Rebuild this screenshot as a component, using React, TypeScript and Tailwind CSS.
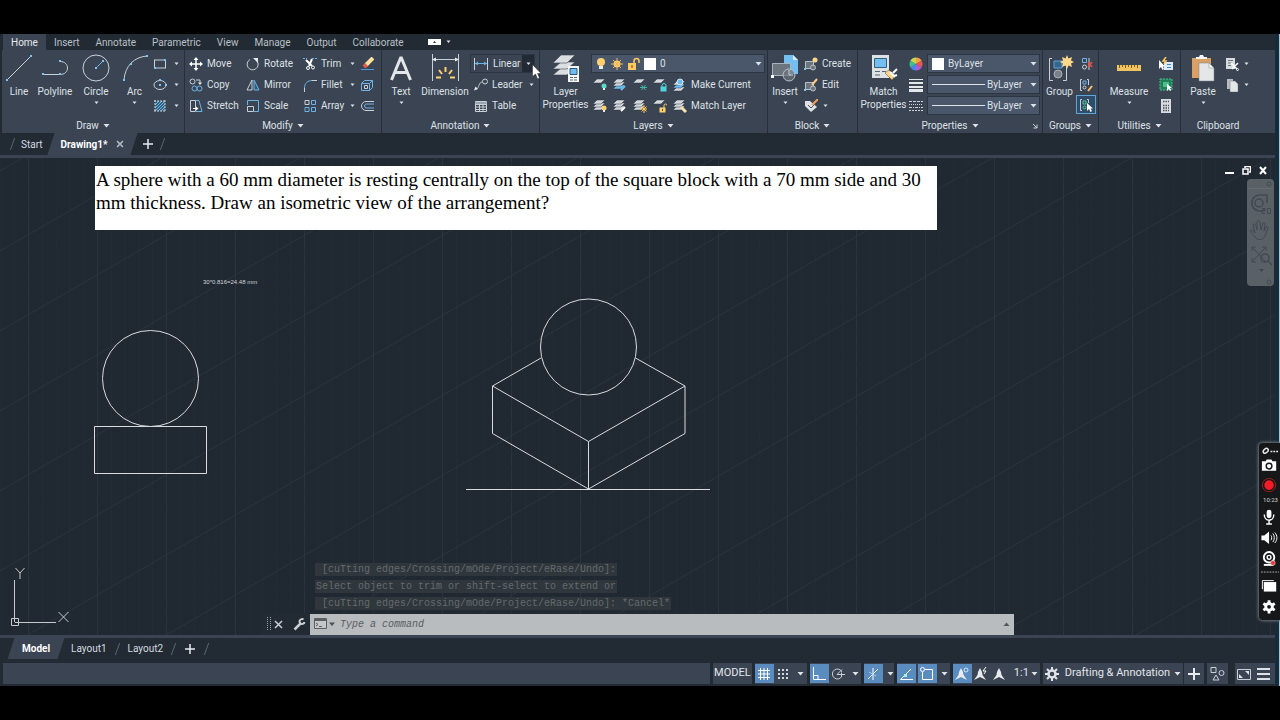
import { useState, type ReactNode } from "react";
import clsx from "clsx";

type IconProps = { w?: number; h?: number; children: ReactNode };

const Icon = ({ w = 14, h = 14, children }: IconProps) => (
  <svg
    width={w}
    height={h}
    viewBox={`0 0 ${w} ${h}`}
    fill="none"
    stroke="#c9d0d8"
    strokeWidth="1"
    className="shrink-0"
    aria-hidden="true">
    {children}
  </svg>
);

const Arrow = ({ small = false }: { small?: boolean }) => (
  <svg width="7" height="4" viewBox="0 0 7 4" className="shrink-0" aria-hidden="true">
    <path d={small ? "M1.5 0.5h4l-2 2.5z" : "M0.5 0h6l-3 3.5z"} fill="#dfe3e8" />
  </svg>
);

const Dot = ({ x, y }: { x: number; y: number }) => (
  <rect x={x - 1} y={y - 1} width="2" height="2" fill="#7cc4f4" stroke="none" />
);

/* ---------- draw ---------- */

const LineIcon = () => (
  <Icon w={30} h={30}>
    <path d="M3 27L27 3" />
    <Dot x={3} y={27} />
    <Dot x={27} y={3} />
  </Icon>
);

const PolylineIcon = () => (
  <Icon w={30} h={30}>
    <path d="M3 21.500h17c10 0 10-13 0-13" />
    <Dot x={3} y={21} />
    <Dot x={20} y={21} />
    <Dot x={20} y={8} />
  </Icon>
);

const CircleIcon = () => (
  <Icon w={30} h={30}>
    <circle cx="15" cy="15" r="13" />
    <path d="M15 15l7-7" stroke="#6cb4e6" />
    <Dot x={15} y={15} />
    <Dot x={22} y={8} />
  </Icon>
);

const ArcIcon = () => (
  <Icon w={30} h={30}>
    <path d="M4 27C5 13 14 4 27 3" />
    <Dot x={4} y={27} />
    <Dot x={11} y={11} />
    <Dot x={27} y={3} />
  </Icon>
);

const RectIcon = () => (
  <Icon>
    <rect x="1.500" y="3" width="11" height="8" />
    <Dot x={2} y={11} />
    <Dot x={12} y={3} />
  </Icon>
);

const EllipseIcon = () => (
  <Icon>
    <ellipse cx="7" cy="7" rx="6" ry="4.500" />
    <Dot x={7} y={7} />
    <Dot x={13} y={7} />
    <Dot x={7} y={2} />
  </Icon>
);

const HatchIcon = () => (
  <Icon>
    <path d="M2 2h10v10H2z" fill="#35607f" stroke="none" />
    <path d="M2 6l4-4M2 9l7-7M2 12l10-10M5 12l7-7M8 12l4-4" stroke="#6cb4e6" />
    <path d="M1 2h12M1 12h12M2 1v12M12 1v12" strokeDasharray="2 1" />
  </Icon>
);

/* ---------- modify ---------- */

const MoveIcon = () => (
  <Icon>
    <path d="M7 2v10M2 7h10" stroke="#fff" strokeWidth="1.500" />
    <path d="M7 0l2.500 3h-5zM7 14l2.500-3h-5zM0 7l3-2.500v5zM14 7l-3-2.500v5z" fill="#fff" stroke="none" />
  </Icon>
);

const RotateIcon = () => (
  <Icon>
    <path d="M4 2.500a5.500 5.500 0 1 0 7 1.500" />
    <path d="M7 1h5v5z" fill="#e8ebee" stroke="none" />
  </Icon>
);

const TrimIcon = () => (
  <Icon>
    <path d="M0 1.500h4M9 1.500h5" stroke="#6cb4e6" strokeDasharray="2 1" />
    <path d="M3 3l6 6M9 2l-3 7" stroke="#fff" strokeWidth="2" />
    <circle cx="5" cy="11" r="1.500" stroke="#fff" />
    <circle cx="10" cy="10.500" r="1.500" stroke="#fff" />
  </Icon>
);

const EraseIcon = () => (
  <Icon>
    <path d="M1 12.500h13" stroke="#4b9bdc" />
    <path d="M13 1l-7 7" stroke="#ffe0a0" strokeWidth="4" />
    <path d="M6.500 7.500L4 10" stroke="#e25b4d" strokeWidth="4" />
  </Icon>
);

const CopyIcon = () => (
  <Icon>
    <circle cx="3.500" cy="3.500" r="2.500" />
    <path d="M7 2h4v4" />
    <path d="M9 4.500h4l-2 2.500z" fill="#e8ebee" stroke="none" />
    <circle cx="5.500" cy="10.500" r="2.500" stroke="#6cb4e6" />
    <circle cx="10.500" cy="10.500" r="2.500" stroke="#6cb4e6" />
  </Icon>
);

const MirrorIcon = () => (
  <Icon>
    <path d="M6 2v10H1z" />
    <path d="M8 2v10h5z" stroke="#6cb4e6" fill="#315a7c" />
  </Icon>
);

const FilletIcon = () => (
  <Icon>
    <path d="M1.500 14v-4" />
    <path d="M1.500 10C1.500 5 5 2.500 9 2.500" stroke="#6cb4e6" />
    <path d="M9 2.500h5" />
  </Icon>
);

const ExplodeIcon = () => (
  <Icon>
    <path d="M1.500 5.500h8v7h-8zM1.500 5.500l3-3h8v7l-3 3M9.500 5.500l3-3" stroke="#6cb4e6" />
    <path d="M4.500 7.500h3v3h-3z" />
  </Icon>
);

const StretchIcon = () => (
  <Icon>
    <path d="M1.500 1.500h5v11h-5z" />
    <path d="M7 1.500h3l3 11H7" stroke="#6cb4e6" />
    <path d="M4 9.500h4" stroke="#fff" />
    <path d="M7 7.500l2.500 2-2.500 2z" fill="#fff" stroke="none" />
  </Icon>
);

const ScaleIcon = () => (
  <Icon>
    <path d="M1.500 6V1.500h11v11H8" stroke="#6cb4e6" />
    <path d="M1.500 7.500h6v5h-6z" />
  </Icon>
);

const ArrayIcon = () => (
  <Icon>
    <path d="M2 1.500h4v4H2z" />
    <path d="M8.500 1.500h4v4h-4zM2 8.500h4v4H2zM8.500 8.500h4v4h-4z" stroke="#6cb4e6" />
  </Icon>
);

const OffsetIcon = () => (
  <Icon>
    <path d="M14 2.500H6a4.500 4.500 0 0 0 0 9h8" />
    <path d="M14 5h-7.500a2 2 0 0 0 0 4H14" stroke="#6cb4e6" />
  </Icon>
);

/* ---------- annotation ---------- */

const TextIcon = () => (
  <Icon w={24} h={30}>
    <path d="M2.500 27L12 4l9.500 23M6 19.500h12" stroke="#e4e7ea" strokeWidth="3" strokeLinejoin="bevel" />
  </Icon>
);

const DimensionIcon = () => (
  <Icon w={30} h={30}>
    <path d="M2.500 1v27M28.500 1v27M3 6.500h25" />
    <path d="M2 6.500l4-2v4zM29 6.500l-4-2v4z" fill="#e8ebee" stroke="none" />
    <path d="M15.500 14v5M9 17l3 4M22 17l-3 4M6 24.500h5M20 24.500h5" stroke="#ffd070" strokeWidth="2" />
  </Icon>
);

const LinearIcon = () => (
  <Icon w={16}>
    <path d="M1.500 1v12M14.500 1v12" />
    <path d="M2 6.500h12" stroke="#6cb4e6" />
    <path d="M2 6.500l3-2v4zM14 6.500l-3-2v4z" fill="#6cb4e6" stroke="none" />
  </Icon>
);

const LeaderIcon = () => (
  <Icon>
    <circle cx="11" cy="3.500" r="2.500" />
    <path d="M8.500 4C4 4 6 10 2 11" stroke="#b8c0c8" />
    <path d="M0 12.500l1.500-4 2.500 2.500z" fill="#e8ebee" stroke="none" />
  </Icon>
);

const TableIcon = () => (
  <Icon>
    <path d="M1.500 2.500h11v10h-11zM1.500 5.500h11M1.500 8h11M1.500 10.500h11M5.500 5v7M9 5v7" />
    <path d="M1.500 3h11v2h-11z" fill="#9aa4ae" stroke="none" />
  </Icon>
);

/* ---------- layers ---------- */

const LayerPropertiesIcon = () => (
  <Icon w={30} h={30}>
    <g fill="#dcdfe2" stroke="#3b4453" strokeWidth="0.600">
      <path d="M2 22l8-7h14l-8 7z" />
      <path d="M2 16l8-7h14l-8 7z" />
      <path d="M2 10l8-8h14l-8 8z" />
    </g>
    <path d="M17 13h11v16H17z" fill="#f4f6f8" stroke="none" />
    <path d="M19 15.500h7v6h-7z" fill="#6ebcf0" stroke="#2c587c" />
    <path d="M19 24.500h7M19 27h7" stroke="#5b6670" strokeDasharray="3 1" />
  </Icon>
);

const Sheet = ({ y, fill = "#d5d9dd" }: { y: number; fill?: string }) => (
  <path d={`M0 ${y + 4}l4-4h8l-4 4z`} fill={fill} stroke="#2f3743" strokeWidth="0.500" />
);

const Bulb = ({ x, y, color }: { x: number; y: number; color: string }) => (
  <g stroke="none">
    <circle cx={x} cy={y} r="2.500" fill={color} />
    <rect x={x - 1} y={y + 2} width="2" height="2" fill="#e8ebee" />
  </g>
);

const LayerOffIcon = () => (
  <Icon>
    <Sheet y={1} />
    <Bulb x={11} y={8} color="#5fd8c8" />
  </Icon>
);

const LayerIsolateIcon = () => (
  <Icon>
    <Sheet y={7} fill="#6ebcf0" />
    <Sheet y={4} />
    <Sheet y={1} />
    <path d="M12 8l-4 4" stroke="#6ebcf0" strokeWidth="2" />
  </Icon>
);

const LayerFreezeIcon = () => (
  <Icon>
    <Sheet y={1} />
    <path d="M7 9.500h7M8.500 7l4 5M12.500 7l-4 5" stroke="#43b8a6" />
  </Icon>
);

const LayerLockIcon = () => (
  <Icon>
    <Sheet y={1} />
    <path d="M9 9V7.500a1.500 1.500 0 0 1 4 0V9" stroke="#52d2dc" />
    <path d="M7.500 8.500h6v5h-6z" fill="#52d2dc" stroke="none" />
  </Icon>
);

const MakeCurrentIcon = () => (
  <Icon>
    <Sheet y={9} />
    <Sheet y={6} fill="#6ebcf0" />
    <Sheet y={3} />
    <circle cx="7" cy="4" r="3" fill="#6ebcf0" stroke="#d5e6f2" />
  </Icon>
);

const LayerOnIcon = () => (
  <Icon>
    <Sheet y={7} />
    <Sheet y={4} />
    <Sheet y={1} />
    <Bulb x={11} y={9} color="#ffd070" />
  </Icon>
);

const UnisolateIcon = () => (
  <Icon>
    <Sheet y={7} />
    <Sheet y={4} />
    <Sheet y={1} />
    <path d="M12 8l-4 4" stroke="#fff" strokeWidth="2" />
  </Icon>
);

const ThawIcon = () => (
  <Icon>
    <Sheet y={7} />
    <Sheet y={4} />
    <Sheet y={1} />
    <path d="M11 6v8M7 10h8M8.500 7.500l5 5M13.500 7.500l-5 5" stroke="#ffc860" />
  </Icon>
);

const UnlockIcon = () => (
  <Icon>
    <Sheet y={1} />
    <path d="M11 9V6.500a1.500 1.500 0 0 1 3 0" stroke="#ffd070" />
    <path d="M6.500 8.500h6v5h-6z" fill="#ffd070" stroke="none" />
    <path d="M9 10h1v2H9z" fill="#6b4d10" stroke="none" />
  </Icon>
);

const MatchLayerIcon = () => (
  <Icon>
    <Sheet y={7} />
    <Sheet y={4} />
    <Sheet y={1} />
    <path d="M8 8l5 5" stroke="#f8e3b0" strokeWidth="3" />
  </Icon>
);

const LayerStateIcons = () => (
  <Icon w={46}>
    <circle cx="5" cy="5" r="4" fill="#ffd070" stroke="none" />
    <path d="M3 9h4v3H3z" fill="#e8ebee" stroke="none" />
    <circle cx="21" cy="7" r="3.500" fill="#ffd070" stroke="none" />
    <path d="M21 1v12M15 7h12M17 3l8 8M25 3l-8 8" stroke="#e9b85c" />
    <path d="M38 6V4a2.500 2.500 0 0 1 5 0v2" stroke="#ffc860" strokeWidth="1.500" />
    <path d="M32 6h8v7h-8z" fill="#ffc860" stroke="none" />
    <path d="M35.500 8h1v3h-1z" fill="#6b4d10" stroke="none" />
  </Icon>
);

/* ---------- block ---------- */

const InsertIcon = () => (
  <Icon w={30} h={30}>
    <path d="M14 2h9l5 5v14H14z" fill="#74bff2" stroke="none" />
    <path d="M23 2v5h5z" fill="#d6ecfb" stroke="none" />
    <path d="M2.500 10.500h18v12h-18z" fill="#6c747d" stroke="#aab2ba" />
    <circle cx="19" cy="22" r="6" fill="#6c747d" fillOpacity="0.700" stroke="#b8c0c8" />
    <path d="M19 17v5h4" />
    <path d="M1 22h3v3H1z" fill="#fff" stroke="none" />
  </Icon>
);

const CreateIcon = () => (
  <Icon>
    <path d="M1.500 4.500h8v7h-8z" fill="#6c747d" stroke="#b8c0c8" />
    <circle cx="9" cy="10.500" r="2.500" fill="#6c747d" stroke="#b8c0c8" />
    <circle cx="11" cy="3" r="2.500" fill="#ffd88a" stroke="none" />
    <Dot x={1} y={12} />
  </Icon>
);

const EditIcon = () => (
  <Icon>
    <path d="M1.500 4.500h8v7h-8z" fill="#6c747d" stroke="#b8c0c8" />
    <circle cx="9" cy="10.500" r="2.500" fill="#6c747d" stroke="#b8c0c8" />
    <path d="M13 1L8 7" stroke="#ffc98a" strokeWidth="2" />
    <Dot x={1} y={12} />
  </Icon>
);

const AttributesIcon = () => (
  <Icon>
    <path d="M1 2h5l7 6-6 5-6-6z" fill="#dfe2e5" stroke="none" />
    <path d="M4 6l3 3 3-3" stroke="#4a5360" />
    <path d="M14 0L8 6" stroke="#f0a35c" strokeWidth="2" />
  </Icon>
);

/* ---------- properties ---------- */

const MatchPropertiesIcon = () => (
  <Icon w={30} h={30}>
    <path d="M3 2h17v23H3z" fill="#dfe2e5" stroke="none" />
    <path d="M5.500 5.500h12v9h-12z" fill="#74bff2" stroke="#33607f" />
    <path d="M6 18.500h5M6 22h5M13 18.500h4" stroke="#5b6670" />
    <path d="M16 20l4-3 6 6-3 4z" fill="#ffd48a" stroke="#5a4a2c" strokeWidth="0.500" />
    <path d="M21 19l5 5M24 20l4-4M25 23l3-1" stroke="#fff" strokeWidth="2" />
  </Icon>
);

const ColorWheelIcon = () => (
  <Icon>
    <g stroke="none">
      <path d="M7 7V0.500a6.500 6.500 0 0 1 5.600 3.200z" fill="#f5a142" />
      <path d="M7 7l5.600-3.300a6.500 6.500 0 0 1 0 6.600z" fill="#e8584f" />
      <path d="M7 7l5.600 3.300A6.500 6.500 0 0 1 7 13.500z" fill="#b45bd0" />
      <path d="M7 7v6.500a6.500 6.500 0 0 1-5.600-3.200z" fill="#4a86e8" />
      <path d="M7 7l-5.600 3.300a6.500 6.500 0 0 1 0-6.600z" fill="#3fbf8f" />
      <path d="M7 7L1.400 3.700A6.500 6.500 0 0 1 7 0.500z" fill="#c8d84e" />
    </g>
  </Icon>
);

const LineweightIcon = () => (
  <Icon>
    <path d="M0 1h14v1H0zM0 4h14v2H0zM0 8h14v2H0zM0 11h14v3H0z" fill="#e4e7ea" stroke="none" />
  </Icon>
);

const LinetypeIcon = () => (
  <Icon>
    <path d="M0 2.500h14" strokeDasharray="3 1" />
    <path d="M0 5.500h14" strokeDasharray="1 1" />
    <path d="M0 8.500h14" strokeDasharray="3 1 1 1" />
    <path d="M0 11.500h14" strokeDasharray="2 1" />
  </Icon>
);

/* ---------- groups ---------- */

const GroupIcon = () => (
  <Icon w={30} h={30}>
    <path d="M7 5.500H4.500v22H8M18 27.500h3.500V14" />
    <path d="M9 8h8v7H9z" fill="#35658c" stroke="#5fa6d8" />
    <circle cx="13" cy="21" r="4" fill="#79818a" stroke="#a8b0b8" />
    <path d="M22 2l1.500 3.500L27 4l-1 3.500 3 1.500-3 1.500 1 3.500-3.500-1.500L22 16l-1.500-3.500L17 14l1-3.500L15 9l3-1.500L17 4l3.500 1.500z" fill="#ffd88a" stroke="none" />
  </Icon>
);

const UngroupIcon = () => (
  <Icon>
    <path d="M3.500 1.500h4v4h-4z" stroke="#6cb4e6" />
    <circle cx="5.500" cy="10" r="2" />
    <path d="M10 1v12" />
    <path d="M9 5l4 5M13 5l-4 5" stroke="#ec5048" strokeWidth="1.500" />
  </Icon>
);

const GroupEditIcon = () => (
  <Icon>
    <path d="M3 1.500H1.500v11H3M8 1.500h1.500V7" />
    <path d="M4 3h3v3H4z" stroke="#6cb4e6" />
    <circle cx="5.500" cy="9.500" r="1.500" />
    <path d="M13 8l-4 5" stroke="#ffc070" strokeWidth="2" />
  </Icon>
);

const GroupSelectIcon = () => (
  <Icon>
    <path d="M3 1.500H1.500v11H3M8 1.500h1.500V5" />
    <path d="M4 3h3v3H4z" stroke="#58c890" />
    <circle cx="5.500" cy="9.500" r="1.500" stroke="#58c890" />
    <path d="M8 5v8l2-2 1.500 3 1.500-1-1.500-2.500H14z" fill="#fff" stroke="none" />
  </Icon>
);

/* ---------- utilities + clipboard ---------- */

const RulerIcon = () => (
  <Icon w={26} h={30}>
    <path d="M1 12h24v6H1z" fill="#f0c460" stroke="none" />
    <path d="M3.500 12v3M6.500 12v2M9.500 12v3M12.500 12v2M15.500 12v3M18.500 12v2M21.500 12v3" stroke="#7a5d20" />
  </Icon>
);

const QuickSelectIcon = () => (
  <Icon>
    <path d="M5 5h9v8H5z" fill="#dcebf7" stroke="none" />
    <path d="M8 7.500h4M8 10.500h4" stroke="#3d86c8" />
    <path d="M7 0L4 4h3L5 7" stroke="#ffc860" strokeWidth="1.500" />
    <path d="M0 3v9l2-2 1.500 3L5 12 4 9.500h2z" fill="#fff" stroke="none" />
  </Icon>
);

const SelectAllIcon = () => (
  <Icon>
    <path d="M1 1h12v11H1z" fill="#1f7f58" stroke="#4fc08d" strokeDasharray="2 1" />
    <path d="M4 4h6v5H4z" fill="#4fc08d" stroke="none" />
    <path d="M8 6v7l2-2 1 2 1-1-1-2h2z" fill="#fff" stroke="none" />
  </Icon>
);

const CalculatorIcon = () => (
  <Icon>
    <path d="M2 0h10v14H2z" fill="#d8dbde" stroke="none" />
    <path d="M4 2.500h6M4 6.500h6M4 9h6M4 11.500h6" stroke="#4a525c" strokeDasharray="1.500 1" strokeWidth="1.500" />
  </Icon>
);

const PasteIcon = () => (
  <Icon w={26} h={30}>
    <path d="M2 5h19v20H2z" fill="#d9a066" stroke="none" />
    <path d="M6 6V4h3l1-2h3l1 2h3v2z" fill="#f4f6f8" stroke="none" />
    <path d="M9 10h10l5 5v13H9z" fill="#e4e6e8" stroke="#7b828a" strokeWidth="0.500" />
    <path d="M19 10v5h5z" fill="#fff" stroke="#7b828a" strokeWidth="0.500" />
  </Icon>
);

const CutIcon = () => (
  <Icon>
    <path d="M1 1h9v11H1z" fill="#d8dbde" stroke="none" />
    <path d="M3 3.500h5M3 6h4M3 8.500h3" stroke="#6b747e" />
    <path d="M6 6l6 6M13 6l-6 6" stroke="#fff" strokeWidth="1.500" />
    <circle cx="12.500" cy="12.500" r="1" stroke="#fff" />
  </Icon>
);

const CopyClipIcon = () => (
  <Icon>
    <path d="M2 1h6v10H2z" fill="#b8bdc2" stroke="none" />
    <path d="M5 3h5l3 3v8H5z" fill="#e4e6e8" stroke="#6b747e" strokeWidth="0.500" />
  </Icon>
);

/* ---------- ribbon parts ---------- */

const Panel = ({
  title,
  className,
  menu = true,
  launcher = false,
  children,
}: {
  title: string;
  className: string;
  menu?: boolean;
  launcher?: boolean;
  children: ReactNode;
}) => (
  <section className={clsx("flex flex-col border-[#272f3a] pt-[3px]", className)}>
    <div className="flex h-[63px]">{children}</div>
    <div className="relative flex h-[17px] items-center justify-center gap-1 pt-0.5">
      <span>{title}</span>
      {menu && <Arrow />}
      {launcher && (
        <span className="absolute right-1">
          <Icon w={6} h={6}>
            <path d="M1 1l4 4M5 1.500V5H1.500" />
          </Icon>
        </span>
      )}
    </div>
  </section>
);

const BigButton = ({
  icon,
  label,
  second,
  arrow = false,
  className,
}: {
  icon: ReactNode;
  label: string;
  second?: string;
  arrow?: boolean;
  className: string;
}) => (
  <button type="button" className={clsx("flex shrink-0 flex-col items-center", className)}>
    {icon}
    <span className="leading-[18px]">{label}</span>
    {second && <span className="leading-2">{second}</span>}
    {arrow && <Arrow small />}
  </button>
);

const Tool = ({ icon, label, arrow = false }: { icon: ReactNode; label?: string; arrow?: boolean }) => (
  <button type="button" className="flex h-[21px] w-full items-center gap-1">
    {icon}
    {label && <span className="whitespace-nowrap">{label}</span>}
    {arrow && (
      <span className="ml-auto">
        <Arrow small />
      </span>
    )}
  </button>
);

const Combo = ({ label, value, children }: { label: string; value: string; children: ReactNode }) => (
  <label className="my-px flex h-[19px] items-center border border-[#2c3542] bg-[#4a566a] pr-0.5 pl-1">
    {children}
    <select
      aria-label={label}
      defaultValue={value}
      className="min-w-0 flex-1 appearance-none bg-transparent outline-none">
      <option>{value}</option>
    </select>
    <Arrow />
  </label>
);

const Ribbon = () => (
  <div className="ml-0.5 flex h-[83px] bg-[#3b4453]">
    <Panel title="Draw" className="w-[183px] border-r">
      <BigButton icon={<LineIcon />} label="Line" className="w-[34px]" />
      <BigButton icon={<PolylineIcon />} label="Polyline" className="w-[38px]" />
      <BigButton icon={<CircleIcon />} label="Circle" arrow className="w-[44px]" />
      <BigButton icon={<ArcIcon />} label="Arc" arrow className="w-[33px]" />
      <div className="flex-1 pr-1 pl-0.5">
        <Tool icon={<RectIcon />} arrow />
        <Tool icon={<EllipseIcon />} arrow />
        <Tool icon={<HatchIcon />} arrow />
      </div>
    </Panel>

    <Panel title="Modify" className="w-[197px] border-r">
      <div className="grid flex-1 grid-cols-[53px_53px_53px_14px] content-start gap-x-1 pl-1">
        <Tool icon={<MoveIcon />} label="Move" />
        <Tool icon={<RotateIcon />} label="Rotate" />
        <Tool icon={<TrimIcon />} label="Trim" arrow />
        <Tool icon={<EraseIcon />} />
        <Tool icon={<CopyIcon />} label="Copy" />
        <Tool icon={<MirrorIcon />} label="Mirror" />
        <Tool icon={<FilletIcon />} label="Fillet" arrow />
        <Tool icon={<ExplodeIcon />} />
        <Tool icon={<StretchIcon />} label="Stretch" />
        <Tool icon={<ScaleIcon />} label="Scale" />
        <Tool icon={<ArrayIcon />} label="Array" arrow />
        <Tool icon={<OffsetIcon />} />
      </div>
    </Panel>

    <Panel title="Annotation" className="w-[158px] border-r">
      <BigButton icon={<TextIcon />} label="Text" arrow className="w-[38px]" />
      <BigButton icon={<DimensionIcon />} label="Dimension" className="w-[50px]" />
      <div className="flex-1 pr-1">
        <div className="my-px flex h-[19px] border border-[#2c3542]">
          <button type="button" className="flex flex-1 items-center gap-1 pl-0.5">
            <LinearIcon />
            Linear
          </button>
          <button type="button" aria-label="Linear menu" className="flex w-3 items-center justify-center bg-[#222a35]">
            <Arrow small />
          </button>
        </div>
        <div className="pl-1">
          <Tool icon={<LeaderIcon />} label="Leader" arrow />
          <Tool icon={<TableIcon />} label="Table" />
        </div>
      </div>
    </Panel>

    <Panel title="Layers" className="w-[228px] border-r">
      <BigButton icon={<LayerPropertiesIcon />} label="Layer" second="Properties" className="w-[51px]" />
      <div className="flex-1 pr-0.5">
        <Combo label="Layer" value="0">
          <LayerStateIcons />
          <span className="mr-1 ml-0.5 h-3 w-3 bg-white" />
        </Combo>
        <div className="grid grid-cols-[16px_16px_16px_16px_80px] gap-x-1 pl-0.5">
          <Tool icon={<LayerOffIcon />} />
          <Tool icon={<LayerIsolateIcon />} />
          <Tool icon={<LayerFreezeIcon />} />
          <Tool icon={<LayerLockIcon />} />
          <Tool icon={<MakeCurrentIcon />} label="Make Current" />
          <Tool icon={<LayerOnIcon />} />
          <Tool icon={<UnisolateIcon />} />
          <Tool icon={<ThawIcon />} />
          <Tool icon={<UnlockIcon />} />
          <Tool icon={<MatchLayerIcon />} label="Match Layer" />
        </div>
      </div>
    </Panel>

    <Panel title="Block" className="w-[90px] border-r">
      <BigButton icon={<InsertIcon />} label="Insert" arrow className="w-[34px]" />
      <div className="pl-0.5">
        <Tool icon={<CreateIcon />} label="Create" />
        <Tool icon={<EditIcon />} label="Edit" />
        <div className="w-6">
          <Tool icon={<AttributesIcon />} arrow />
        </div>
      </div>
    </Panel>

    <Panel title="Properties" launcher className="w-[185px] border-r">
      <BigButton icon={<MatchPropertiesIcon />} label="Match" second="Properties" className="w-[51px]" />
      <div className="w-[18px]">
        <Tool icon={<ColorWheelIcon />} />
        <Tool icon={<LineweightIcon />} />
        <Tool icon={<LinetypeIcon />} />
      </div>
      <div className="flex flex-1 flex-col pr-0.5">
        <Combo label="Object color" value="ByLayer">
          <span className="mr-1 h-3 w-3 bg-white" />
        </Combo>
        <Combo label="Lineweight" value="ByLayer">
          <span className="mr-0.5 h-px w-[53px] bg-[#dfe3e8]" />
        </Combo>
        <Combo label="Linetype" value="ByLayer">
          <span className="mr-0.5 h-px w-[53px] bg-[#dfe3e8]" />
        </Combo>
      </div>
    </Panel>

    <Panel title="Groups" className="w-[56px] border-r">
      <BigButton icon={<GroupIcon />} label="Group" className="w-[33px]" />
      <div className="w-[20px]">
        <div className="px-[3px]">
          <Tool icon={<UngroupIcon />} />
          <Tool icon={<GroupEditIcon />} />
        </div>
        <div className="border border-[#5fa6d8] bg-[#2f4c68] px-0.5">
          <button type="button" aria-label="Group selection" className="flex h-[17px] items-center">
            <GroupSelectIcon />
          </button>
        </div>
      </div>
    </Panel>

    <Panel title="Utilities" className="w-[82px] border-r">
      <BigButton icon={<RulerIcon />} label="Measure" arrow className="w-[60px]" />
      <div className="w-[14px]">
        <Tool icon={<QuickSelectIcon />} />
        <Tool icon={<SelectAllIcon />} />
        <Tool icon={<CalculatorIcon />} />
      </div>
    </Panel>

    <Panel title="Clipboard" menu={false} className="w-[74px]">
      <BigButton icon={<PasteIcon />} label="Paste" arrow className="w-[44px]" />
      <div className="w-6">
        <Tool icon={<CutIcon />} arrow />
        <Tool icon={<CopyClipIcon />} arrow />
      </div>
    </Panel>
  </div>
);

/* ---------- tab rows ---------- */

const menuTabs = ["Home", "Insert", "Annotate", "Parametric", "View", "Manage", "Output", "Collaborate"];

const MenuTabs = () => {
  const [active, setActive] = useState("Home");
  return (
    <nav className="flex h-4 items-center pl-[3px] text-[#b9c0c8]">
      {menuTabs.map((tab) => (
        <button
          key={tab}
          type="button"
          onClick={() => setActive(tab)}
          className={clsx("h-4 px-2", tab === active && "bg-[#3b4453] text-[#e6e9ec]")}>
          {tab}
        </button>
      ))}
      <button type="button" aria-label="Ribbon display" className="ml-4 flex items-center gap-1">
        <Icon w={13} h={6}>
          <path d="M0 0h13v6H0z" fill="#fff" stroke="none" />
          <path d="M5 4h3L6.500 2z" fill="#333" stroke="none" />
        </Icon>
        <Arrow small />
      </button>
    </nav>
  );
};

const Slash = () => <span className="h-3 w-px -skew-x-[20deg] bg-[#5c6571]" />;

const Plus = () => (
  <Icon w={12} h={12}>
    <path d="M6 1v10M1 6h10" stroke="#e8ebee" strokeWidth="1.500" />
  </Icon>
);

const FileTabs = () => (
  <div className="flex h-[22px] items-center gap-2 pl-3 text-[#d5dae0]">
    <Slash />
    <button type="button">Start</button>
    <div className="relative flex h-full items-center gap-2 px-2.5">
      <span className="absolute inset-0 -skew-x-[18deg] bg-[#3b4453]" />
      <button type="button" className="relative font-bold text-white">Drawing1*</button>
      <button type="button" aria-label="Close drawing" className="relative">
        <Icon w={8} h={8}>
          <path d="M1 1l6 6M7 1l-6 6" stroke="#b8c0c8" strokeWidth="1.500" />
        </Icon>
      </button>
    </div>
    <button type="button" aria-label="New drawing"><Plus /></button>
    <Slash />
  </div>
);

const LayoutTabs = () => (
  <div className="h-[25px] pl-[11px] text-[#d5dae0]">
    <div className="flex h-[21px] items-center gap-2.5">
      <div className="relative flex h-full items-center px-[11px]">
        <span className="absolute inset-0 -skew-x-[18deg] bg-[#3b4453]" />
        <button type="button" className="relative font-bold text-white">Model</button>
      </div>
      <button type="button">Layout1</button>
      <Slash />
      <button type="button">Layout2</button>
      <Slash />
      <button type="button" aria-label="New layout"><Plus /></button>
      <Slash />
    </div>
  </div>
);

/* ---------- canvas ---------- */

const columns = Array.from({ length: 140 }, (_, i) => i);

const Drawing = () => (
  <svg className="absolute inset-0 h-full w-full" fill="none" aria-hidden="true">
    {columns.map((i) => (
      <path
        key={`v${i}`}
        d={`M${28.5 + (i - 2) * 13.8} 0v2000`}
        stroke={(i - 2) % 5 === 0 ? "#2b343e" : "#242d37"}
      />
    ))}
    {columns.map((i) => (
      <path
        key={`d${i}`}
        d={`M0 ${13 + i * 16}l2000 -1155`}
        stroke={i % 5 === 0 ? "#2b343e" : "#222b35"}
      />
    ))}
    <g stroke="#d8dbde">
      <circle cx="150.500" cy="220.500" r="48" />
      <path d="M94.500 268.500h112v47h-112z" />
      <circle cx="588.500" cy="189" r="48" />
      <path d="M541 200l-48.500 28 96 55.500 96.500-55.500-49.500-28" />
      <path d="M492.500 228v47.500l96 55.500 96.500-55.500V228M588.500 283.500V331" />
      <path d="M466 331.500h244" />
    </g>
    <g stroke="#c5cace">
      <path d="M14.500 422v42M15 464.500h41M11.500 460.500h7v7h-7z" />
      <path d="M15.500 410l4.500 5 4.500-5M20 415v6M58.500 454l10 10M68.500 454l-10 10" />
    </g>
    <text x="203" y="126" fontSize="6" fill="#d0d4d8" className="font-['Liberation_Sans']">
      30*0.816=24.48 mm
    </text>
  </svg>
);

const WindowControls = () => (
  <div className="absolute top-2 right-2 flex items-center gap-2">
    <button type="button" aria-label="Minimize">
      <Icon w={9} h={9}>
        <path d="M0 7h9" stroke="#fff" strokeWidth="2" />
      </Icon>
    </button>
    <button type="button" aria-label="Restore">
      <Icon w={9} h={9}>
        <path d="M3 2V0.500h5.500V6H7M1 3h5v5H1z" stroke="#fff" strokeWidth="1.500" />
      </Icon>
    </button>
    <button type="button" aria-label="Close">
      <Icon w={8} h={9}>
        <path d="M1 1l6 7M7 1L1 8" stroke="#fff" strokeWidth="2" />
      </Icon>
    </button>
  </div>
);

const NavBar = () => (
  <div className="absolute top-[21px] right-px rounded-sm bg-[#5a6166]">
    <svg width="27" height="107" viewBox="0 0 27 107" fill="none" stroke="#41484f" aria-hidden="true">
      <path d="M1 9.500h25" stroke="#646b70" />
      <circle cx="22" cy="5" r="2" />
      <path d="M20 24v-8h-8a8 8 0 1 0 6 14" strokeWidth="1.500" />
      <circle cx="12" cy="24" r="4" strokeWidth="1.500" />
      <path d="M15 29.500h3v2.500h-3v2.500h3M20.500 29.500h3v5h-3z" />
      <path d="M8 58c-3-4-5-5-4-7 2 0 3 2 4 3l-2-8c1-2 2-1 3 1l1 4V43c1-2 2-2 3 0l1 8 2-7c1-1 2 0 2 1l-1 7 2-4c1-1 2 0 2 1l-3 8c-1 4-8 5-10 1z" />
      <path d="M5 68l14 15M19 68L5 83M5 72v-4h4M15 68h4v4M5 79v4h4" />
      <circle cx="18" cy="79" r="4" strokeWidth="1.500" />
      <path d="M21 82l4 4" strokeWidth="1.500" />
      <path d="M12 90h5l-2.500 3z" fill="#3f464d" stroke="none" />
      <circle cx="22" cy="103" r="2" />
    </svg>
  </div>
);

const history = [
  "\u00a0[cuTting edges/Crossing/mOde/Project/eRase/Undo]:",
  "Select object to trim or shift-select to extend or",
  "\u00a0[cuTting edges/Crossing/mOde/Project/eRase/Undo]: *Cancel*",
];

const CommandLine = () => (
  <div className="absolute right-[261px] bottom-0 left-[262px] font-['Liberation_Mono',monospace]">
    <div className="mb-[3px] flex flex-col items-start gap-1 pl-[53px] text-[#646a6e]">
      {history.map((line, i) => (
        <p key={i} className="bg-[#30373c] px-px leading-[13px]">{line}</p>
      ))}
    </div>
    <div className="flex h-[22px] items-center bg-[#222a33]">
      <div className="flex w-12 items-center gap-0.5 pl-1">
        <Icon w={6} h={14}>
          <path d="M1.500 0v14M4.500 0v14" strokeDasharray="1 1" stroke="#9aa2aa" />
        </Icon>
        <button type="button" aria-label="Close command line">
          <Icon w={9} h={9}>
            <path d="M1 1l7 7M8 1L1 8" stroke="#c9ced4" strokeWidth="1.500" />
          </Icon>
        </button>
        <button type="button" aria-label="Customize" className="ml-2">
          <Icon w={13} h={13}>
            <path d="M1.500 11.500L8 5" stroke="#c9ced4" strokeWidth="2.500" />
            <path d="M10.500 1.500a2.500 2.500 0 1 0 1 2.500" stroke="#c9ced4" strokeWidth="2" />
          </Icon>
        </button>
      </div>
      <div className="flex h-[21px] flex-1 items-center bg-[#b9bcbe] pr-1 pl-1">
        <Icon w={22} h={12}>
          <path d="M0.500 0.500h12v10H0.500z" stroke="#5a5f64" fill="#c4c7c9" />
          <path d="M0.500 2h12" stroke="#5a5f64" strokeWidth="2" />
          <path d="M2 5l2 1.500L2 8M5 8.500h3" stroke="#5a5f64" />
          <path d="M15 4.500h6l-3 3.500z" fill="#4a4f54" stroke="none" />
        </Icon>
        <input
          aria-label="Command"
          placeholder="Type a command"
          className="ml-1 min-w-0 flex-1 bg-transparent italic outline-none placeholder:text-[#585d61]"
        />
        <Icon w={7} h={4}>
          <path d="M0.500 4h6l-3-3.500z" fill="#50565b" stroke="none" />
        </Icon>
      </div>
    </div>
  </div>
);

const Canvas = () => (
  <main className="relative min-h-0 flex-1 overflow-hidden bg-[#202932]">
    <Drawing />
    <div className="absolute top-2 left-[95px] h-16 w-[842px] bg-white pt-0.5 pl-px font-['Liberation_Serif',serif] text-[19px] leading-[23px] text-black">
      A sphere with a 60 mm diameter is resting centrally on the top of the square block with a 70 mm side and 30
      mm thickness. Draw an isometric view of the arrangement?
    </div>
    <WindowControls />
    <NavBar />
    <CommandLine />
  </main>
);

/* ---------- status bar ---------- */

const Toggle = ({ label, on = false, children }: { label: string; on?: boolean; children: ReactNode }) => (
  <button
    type="button"
    aria-label={label}
    aria-pressed={on}
    className={clsx("flex h-[19px] w-[19px] shrink-0 items-center justify-center", on && "bg-[#5b8cc0]")}>
    {children}
  </button>
);

const Annot = ({ children }: { children?: ReactNode }) => (
  <Icon>
    <path d="M6 1l2 4 .5 3L12 13 6 10l-6 3 3.500-5L4 5z" fill="#e8ebee" stroke="none" />
    {children}
  </Icon>
);

const Gear = ({ size, color }: { size: number; color: string }) => (
  <svg width={size} height={size} viewBox="0 0 14 14" className="shrink-0" aria-hidden="true">
    <circle cx="7" cy="7" r="3.500" fill="none" stroke={color} strokeWidth="2.500" />
    <path
      d="M7 0v3M7 11v3M0 7h3M11 7h3M2 2l2 2M10 10l2 2M12 2l-2 2M4 10l-2 2"
      stroke={color}
      strokeWidth="2"
    />
  </svg>
);

const cell = "flex h-[21px] shrink-0 items-center bg-[#3b4453]";

const StatusBar = () => (
  <footer className="mb-0.5 flex h-[21px] gap-[3px] pl-[3px] text-[11px] text-[#e2e6ea]">
    <div className="flex-1 bg-[#3b4453]" />
    <button type="button" className={clsx(cell, "w-[39px] justify-center")}>MODEL</button>
    <div className={clsx(cell, "w-[52px]")}>
      <Toggle label="Grid" on>
        <Icon>
          <path d="M3.500 1v12M7 1v12M10.500 1v12M1 3.500h12M1 7h12M1 10.500h12" stroke="#fff" />
        </Icon>
      </Toggle>
      <Toggle label="Snap">
        <Icon w={12} h={12}>
          <path d="M1 2h12M1 6h12M1 10h12" stroke="#d5dae0" strokeWidth="2" strokeDasharray="2 2" />
        </Icon>
      </Toggle>
      <span className="ml-1"><Arrow /></span>
    </div>
    <div className={clsx(cell, "w-[51px]")}>
      <Toggle label="Ortho" on>
        <Icon>
          <path d="M1.500 0v12.500H14M2 8.500h4v4" stroke="#fff" />
        </Icon>
      </Toggle>
      <Toggle label="Polar tracking">
        <Icon>
          <path d="M11 5A5 5 0 1 0 11 9M6 7.500h8M6 7.500l5-5M10.500 5.500v4" />
        </Icon>
      </Toggle>
      <span className="ml-1"><Arrow /></span>
    </div>
    <div className={clsx(cell, "w-[30px]")}>
      <Toggle label="Isometric drafting" on>
        <Icon>
          <path d="M2 12L12 2M7 1v12" stroke="#fff" />
          <path d="M3 5l7 4" stroke="#a8d0f0" />
        </Icon>
      </Toggle>
      <span className="ml-1"><Arrow /></span>
    </div>
    <div className={clsx(cell, "w-[53px] gap-0.5")}>
      <Toggle label="Object snap tracking" on>
        <Icon>
          <path d="M12 2L1.500 12.500H14" stroke="#fff" />
          <path d="M5 7h3v3H5z" fill="#a8f0d8" stroke="none" />
        </Icon>
      </Toggle>
      <Toggle label="Object snap" on>
        <Icon>
          <path d="M5 2.500h7.500v10h-10V5" stroke="#fff" />
          <circle cx="2.500" cy="2.500" r="2" stroke="#fff" />
        </Icon>
      </Toggle>
      <span className="ml-0.5"><Arrow /></span>
    </div>
    <div className={clsx(cell, "w-[87px]")}>
      <Toggle label="Annotation visibility" on>
        <Annot>
          <circle cx="11" cy="3" r="2" stroke="#d6e8f8" />
        </Annot>
      </Toggle>
      <Toggle label="Auto scale">
        <Annot>
          <path d="M12 0L9 4h3l-2 3" stroke="#fff" />
        </Annot>
      </Toggle>
      <Toggle label="Annotation scale">
        <Annot />
      </Toggle>
      <button type="button" className="ml-1 flex items-center gap-0.5">
        1:1
        <Arrow />
      </button>
    </div>
    <div className={clsx(cell, "gap-1.5 px-0.5")}>
      <Gear size={14} color="#dfe3e8" />
      <button type="button" className="flex items-center gap-1">
        Drafting &amp; Annotation
        <Arrow />
      </button>
    </div>
    <div className={clsx(cell, "-ml-0.5 w-5 justify-center")}>
      <svg width="14" height="14" viewBox="0 0 14 14" aria-hidden="true">
        <path d="M7 1v12M1 7h12" stroke="#e8ebee" strokeWidth="2" />
      </svg>
    </div>
    <div className={clsx(cell, "w-[21px] justify-center")}>
      <Icon w={15} h={15}>
        <path d="M1 1.500h5v5H1zM6 9l3 5H3z" />
        <circle cx="11.500" cy="7" r="2.500" />
      </Icon>
    </div>
    <div className={clsx(cell, "ml-1 w-10 justify-between pr-1 pl-0.5")}>
      <Icon>
        <path d="M0.500 2.500h13v10H0.500z" />
        <path d="M8 4h4v4zM2 7v4h4z" fill="#dfe3e8" stroke="none" />
      </Icon>
      <Icon>
        <path d="M0 2h13M0 7h13M0 12h13" stroke="#dfe3e8" strokeWidth="2" />
      </Icon>
    </div>
  </footer>
);

/* ---------- floating recorder ---------- */

const Recorder = () => (
  <aside className="absolute top-[443px] right-0 flex h-[177px] w-[21px] flex-col items-center rounded-l-sm bg-[#161719] shadow-[0_0_3px_1px_#6f767c]">
    <svg width="21" height="49" viewBox="0 0 21 49" className="pl-px" aria-hidden="true">
      <ellipse cx="6" cy="7" rx="3" ry="2" transform="rotate(-40 6 7)" fill="none" stroke="#e8e8e8" strokeWidth="1.500" />
      <path d="M11 7h2v1.500h-2zM14 7h2v1.500h-2zM17 7h2v1.500h-2z" fill="#e8e8e8" />
      <path d="M2 18h4l1-2h5l1 2h4v10H2z" fill="#fff" />
      <circle cx="9.500" cy="23" r="3" fill="none" stroke="#161719" strokeWidth="1.500" />
      <circle cx="9.500" cy="43" r="7" fill="none" stroke="#a02020" />
      <circle cx="9.500" cy="43" r="5" fill="#f51c28" />
    </svg>
    <span className="pt-0.5 pl-0.5 text-[6px] leading-[12px] text-[#d5d5d5]">10:23</span>
    <svg width="21" height="114" viewBox="0 0 21 114" className="pl-px" fill="none" stroke="#fff" aria-hidden="true">
      <rect x="7" y="1" width="5" height="9" rx="2.500" fill="#fff" stroke="none" />
      <path d="M4.500 6c0 8 10 8 10 0M9.500 12v4M6.500 16h6" strokeWidth="1.500" />
      <path d="M1.500 28h3l5-4v13l-5-4h-3z" fill="#fff" stroke="none" />
      <path d="M11.500 28c1 1 1 4 0 5M13.500 26c2 2 2 7 0 9M15.500 25c3 3 3 8 0 11" />
      <circle cx="9.500" cy="51" r="5.500" strokeWidth="2" />
      <circle cx="9.500" cy="51" r="2" strokeWidth="1.500" />
      <path d="M4 59h10" strokeWidth="2" />
      <circle cx="13.500" cy="57" r="2.500" fill="#e03a3a" stroke="#fff" strokeWidth="0.500" />
      <path d="M1 66.500h19" strokeDasharray="2 1" stroke="#aaa" />
      <path d="M2.500 84.500v-9h12" />
      <path d="M4 77h13v10H4z" fill="#fff" stroke="none" />
      <g transform="translate(2.500 96)">
        <circle cx="7" cy="7" r="3.500" strokeWidth="3" />
        <path d="M7 0v3M7 11v3M1 3.500l2.500 1.500M10.500 9l2.500 1.500M13 3.500L10.500 5M3.500 9L1 10.500" strokeWidth="3" />
      </g>
    </svg>
  </aside>
);

const Cursor = () => (
  <svg width="10" height="16" viewBox="0 0 10 16" className="absolute top-16 left-[532px]" aria-hidden="true">
    <path d="M0.500 0.500v12l3-2.500 2 5 2-1-2-4.500H9z" fill="#fff" stroke="#222" strokeWidth="0.500" />
  </svg>
);

export default function App() {
  return (
    <div className="relative h-screen overflow-hidden bg-black py-[34px] font-['Roboto',sans-serif] text-[10px] text-[#dde1e6]">
      <div className="flex h-full flex-col border-r border-[#9cc7d8] bg-[#222a33]">
        <div className="flex min-h-0 flex-1 flex-col border-r-4 border-[#182b3a]">
          <MenuTabs />
          <Ribbon />
          <FileTabs />
          <div className="h-[3px] bg-[#3b4453]" />
          <Canvas />
          <div className="h-[3px] bg-[#3b4453]" />
          <LayoutTabs />
          <StatusBar />
        </div>
      </div>
      <Recorder />
      <Cursor />
    </div>
  );
}
